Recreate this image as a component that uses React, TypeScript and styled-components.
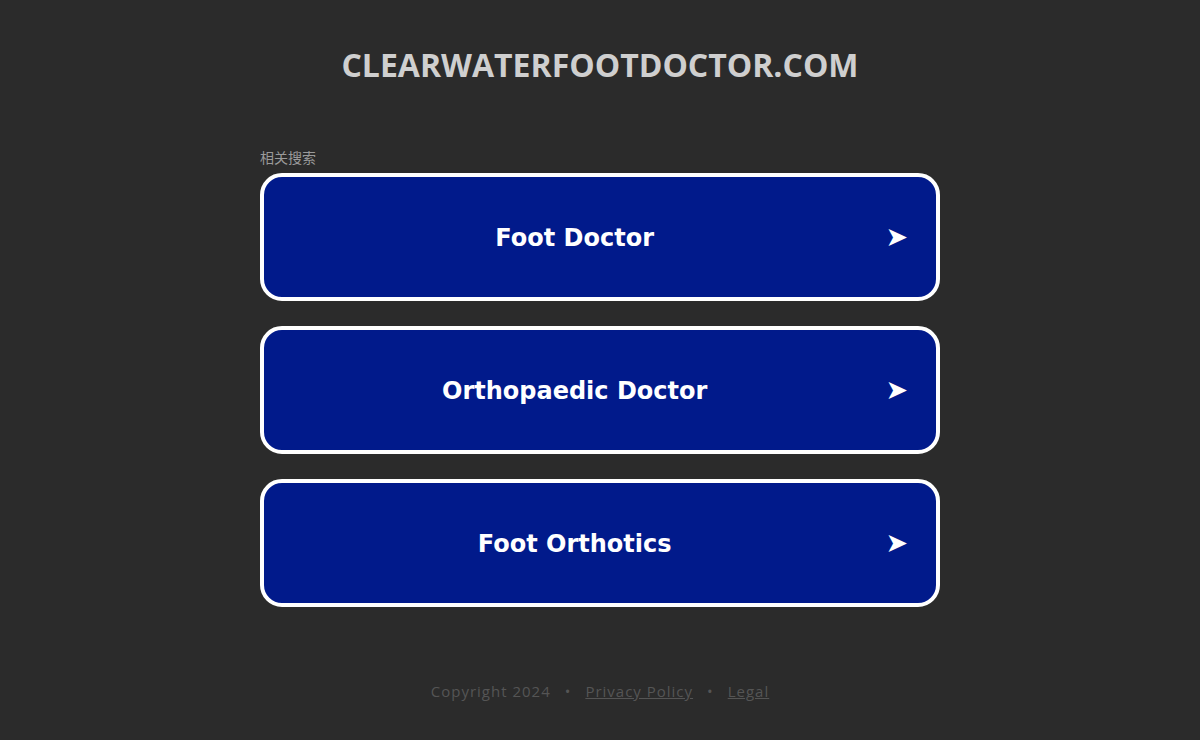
import React from "react";
import styled, { createGlobalStyle } from "styled-components";

const Global = createGlobalStyle`
  html, body { margin: 0; padding: 0; background: #2b2b2b; }
  body { font-family: "Open Sans", "Noto Sans", sans-serif; }
`;

const Page = styled.div`
  min-height: 740px;
  display: flex;
  flex-direction: column;
  align-items: center;
`;

const Title = styled.h1`
  margin: 43px 0 0;
  height: 44px;
  line-height: 44px;
  font-family: "Open Sans", sans-serif;
  font-weight: 700;
  font-size: 32px;
  color: #cfcfcf;
  letter-spacing: 0;
`;

const Section = styled.div`
  width: 680px;
  margin-top: 62px;
  display: flex;
  flex-direction: column;
`;

const Label = styled.div`
  font-family: "Noto Sans CJK SC", sans-serif;
  font-size: 14px;
  line-height: 16px;
  color: #9a9a9a;
  margin-bottom: 8px;
`;

const List = styled.div`
  display: flex;
  flex-direction: column;
  gap: 25px;
`;

const Card = styled.a`
  box-sizing: border-box;
  height: 128px;
  border: 4px solid #ffffff;
  border-radius: 22px;
  background: #011a8b;
  display: flex;
  align-items: center;
  padding: 0 28px 0 0;
  text-decoration: none;
  color: #ffffff;
`;

const CardText = styled.span`
  flex: 1;
  text-align: center;
  padding-top: 2px;
  font-family: "DejaVu Sans", Verdana, sans-serif;
  font-weight: 700;
  font-size: 24px;
`;

const Arrow = styled.span`
  margin-bottom: 2px;
  font-family: "DejaVu Sans", sans-serif;
  font-size: 27px;
  line-height: 1;
  color: #ffffff;
`;

const Footer = styled.div`
  margin-top: 74px;
  font-family: "Open Sans", sans-serif;
  font-size: 15px;
  letter-spacing: 1px;
  color: #555555;
  display: flex;
  gap: 14px;
  align-items: center;
`;

const FootLink = styled.a`
  color: #555555;
  text-decoration: underline;
`;

const items = ["Foot Doctor", "Orthopaedic Doctor", "Foot Orthotics"];

export default function App() {
  return (
    <>
      <Global />
      <Page>
        <Title>CLEARWATERFOOTDOCTOR.COM</Title>
        <Section>
          <Label>相关搜索</Label>
          <List>
            {items.map((t) => (
              <Card key={t} href="#">
                <CardText>{t}</CardText>
                <Arrow>➤</Arrow>
              </Card>
            ))}
          </List>
        </Section>
        <Footer>
          <span>Copyright 2024</span>
          <span>•</span>
          <FootLink href="#">Privacy Policy</FootLink>
          <span>•</span>
          <FootLink href="#">Legal</FootLink>
        </Footer>
      </Page>
    </>
  );
}
